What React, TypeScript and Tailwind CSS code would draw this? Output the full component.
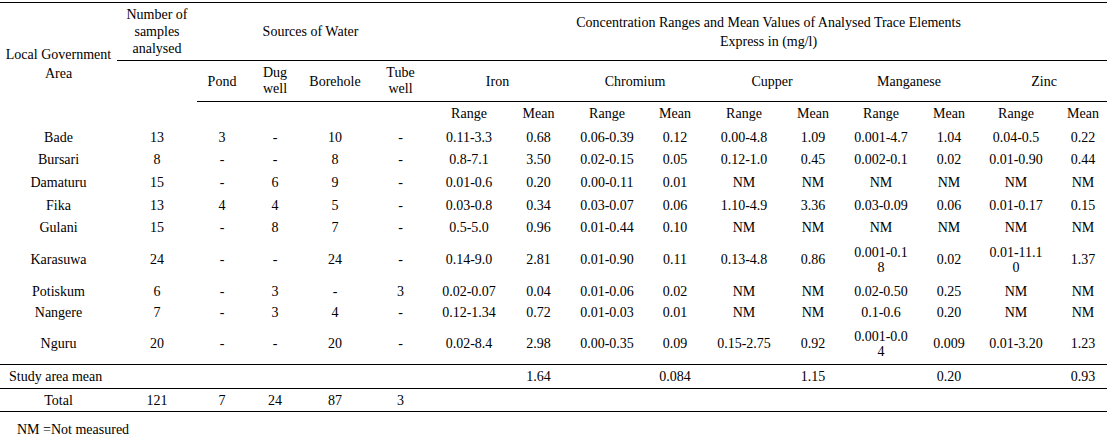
import React from "react";

type Row = { name: string; h: string; cells: React.ReactNode[] };

const rows: Row[] = [
  { name: "Bade", h: "h-[23px]", cells: ["13", "3", "-", "10", "-", "0.11-3.3", "0.68", "0.06-0.39", "0.12", "0.00-4.8", "1.09", "0.001-4.7", "1.04", "0.04-0.5", "0.22"] },
  { name: "Bursari", h: "h-[22px]", cells: ["8", "-", "-", "8", "-", "0.8-7.1", "3.50", "0.02-0.15", "0.05", "0.12-1.0", "0.45", "0.002-0.1", "0.02", "0.01-0.90", "0.44"] },
  { name: "Damaturu", h: "h-[23px]", cells: ["15", "-", "6", "9", "-", "0.01-0.6", "0.20", "0.00-0.11", "0.01", "NM", "NM", "NM", "NM", "NM", "NM"] },
  { name: "Fika", h: "h-[23px]", cells: ["13", "4", "4", "5", "-", "0.03-0.8", "0.34", "0.03-0.07", "0.06", "1.10-4.9", "3.36", "0.03-0.09", "0.06", "0.01-0.17", "0.15"] },
  { name: "Gulani", h: "h-[22px]", cells: ["15", "-", "8", "7", "-", "0.5-5.0", "0.96", "0.01-0.44", "0.10", "NM", "NM", "NM", "NM", "NM", "NM"] },
  {
    name: "Karasuwa",
    h: "h-[42px]",
    cells: ["24", "-", "-", "24", "-", "0.14-9.0", "2.81", "0.01-0.90", "0.11", "0.13-4.8", "0.86", <>0.001-0.1<br />8</>, "0.02", <>0.01-11.1<br />0</>, "1.37"],
  },
  { name: "Potiskum", h: "h-[21px]", cells: ["6", "-", "3", "-", "3", "0.02-0.07", "0.04", "0.01-0.06", "0.02", "NM", "NM", "0.02-0.50", "0.25", "NM", "NM"] },
  { name: "Nangere", h: "h-[22px]", cells: ["7", "-", "3", "4", "-", "0.12-1.34", "0.72", "0.01-0.03", "0.01", "NM", "NM", "0.1-0.6", "0.20", "NM", "NM"] },
  {
    name: "Nguru",
    h: "h-[41px]",
    cells: ["20", "-", "-", "20", "-", "0.02-8.4", "2.98", "0.00-0.35", "0.09", "0.15-2.75", "0.92", <>0.001-0.0<br />4</>, "0.009", "0.01-3.20", "1.23"],
  },
];

const widths = [
  "w-[117px]", "w-[80px]", "w-[50px]", "w-[56px]", "w-[64px]", "w-[67px]",
  "w-[70px]", "w-[69px]", "w-[68px]", "w-[68px]", "w-[70px]", "w-[68px]",
  "w-[68px]", "w-[68px]", "w-[66px]", "w-[68px]",
];

const elements = ["Iron", "Chromium", "Cupper", "Manganese", "Zinc"];

export default function App() {
  return (
    <div className="w-[1107px] h-[438px] overflow-hidden bg-white text-black text-[14px] font-['Liberation_Serif','Times_New_Roman',serif]">
      <div className="pt-[2px]">
        <table className="w-[1117px] table-fixed border-collapse leading-[15px] font-['Liberation_Serif','Times_New_Roman',serif]">
          <colgroup>
            {widths.map((w, i) => (
              <col key={i} className={w} />
            ))}
          </colgroup>
          <thead>
            <tr className="h-[58px] border-t border-black">
              <td rowSpan={3} className="p-0 text-center align-middle leading-[19px]">
                Local Government
                <br />
                Area
              </td>
              <td className="p-0 text-center align-middle leading-[17px] border-b border-black">
                Number of
                <br />
                samples
                <br />
                analysed
              </td>
              <td colSpan={4} className="p-0 pr-[10px] text-center align-middle border-b border-black">
                Sources of Water
              </td>
              <td colSpan={10} className="p-0 pr-[14px] text-center align-middle leading-[19px] border-b border-black">
                Concentration Ranges and Mean Values of Analysed Trace Elements
                <br />
                Express in (mg/l)
              </td>
            </tr>
            <tr className="h-[41px]">
              <td rowSpan={2} className="p-0"></td>
              <td className="p-0 text-center align-middle border-b border-black">Pond</td>
              <td className="p-0 text-center align-middle leading-[16px] border-b border-black">
                Dug
                <br />
                well
              </td>
              <td className="p-0 text-center align-middle border-b border-black">Borehole</td>
              <td className="p-0 text-center align-middle leading-[16px] border-b border-black">
                Tube
                <br />
                well
              </td>
              {elements.map((e) => (
                <td key={e} colSpan={2} className="p-0 pr-3 text-center align-middle border-b border-black">
                  {e}
                </td>
              ))}
            </tr>
            <tr className="h-[24px]">
              <td className="p-0"></td>
              <td className="p-0"></td>
              <td className="p-0"></td>
              <td className="p-0"></td>
              {elements.map((e) => (
                <React.Fragment key={e}>
                  <td className="p-0 text-center align-middle">Range</td>
                  <td className="p-0 text-center align-middle">Mean</td>
                </React.Fragment>
              ))}
            </tr>
          </thead>
          <tbody>
            {rows.map((r) => (
              <tr key={r.name} className={r.h}>
                <td className="p-0 text-center align-middle">{r.name}</td>
                {r.cells.map((c, i) => (
                  <td key={i} className="p-0 text-center align-middle">
                    {c}
                  </td>
                ))}
              </tr>
            ))}
            <tr className="h-[24px] border-t border-black">
              <td colSpan={6} className="p-0 pl-[9px] text-left align-middle">Study area mean</td>
              <td className="p-0"></td>
              <td className="p-0 text-center align-middle">1.64</td>
              <td className="p-0"></td>
              <td className="p-0 text-center align-middle">0.084</td>
              <td className="p-0"></td>
              <td className="p-0 text-center align-middle">1.15</td>
              <td className="p-0"></td>
              <td className="p-0 text-center align-middle">0.20</td>
              <td className="p-0"></td>
              <td className="p-0 text-center align-middle">0.93</td>
            </tr>
            <tr className="h-[23px] border-t border-b border-black">
              <td className="p-0 text-center align-middle">Total</td>
              <td className="p-0 text-center align-middle">121</td>
              <td className="p-0 text-center align-middle">7</td>
              <td className="p-0 text-center align-middle">24</td>
              <td className="p-0 text-center align-middle">87</td>
              <td className="p-0 text-center align-middle">3</td>
              <td colSpan={10} className="p-0"></td>
            </tr>
          </tbody>
        </table>
        <div className="mt-[10px] pl-[17px] leading-[15px]">NM =Not measured</div>
      </div>
    </div>
  );
}
